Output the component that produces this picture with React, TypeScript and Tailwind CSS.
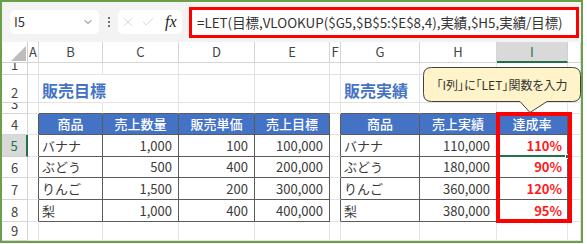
import { Check, ChevronDown, X } from "lucide-react";

const COLS = ["A", "B", "C", "D", "E", "F", "G", "H", "I", ""];

// row 1..9 content, col index A=0..J=9
const DATA: Record<number, Record<number, string>> = {
  2: { 1: "販売目標", 6: "販売実績" },
  4: { 1: "商品", 2: "売上数量", 3: "販売単価", 4: "売上目標", 6: "商品", 7: "売上実績", 8: "達成率" },
  5: { 1: "バナナ", 2: "1,000", 3: "100", 4: "100,000", 6: "バナナ", 7: "110,000", 8: "110%" },
  6: { 1: "ぶどう", 2: "500", 3: "400", 4: "200,000", 6: "ぶどう", 7: "180,000", 8: "90%" },
  7: { 1: "りんご", 2: "1,500", 3: "200", 4: "300,000", 6: "りんご", 7: "360,000", 8: "120%" },
  8: { 1: "梨", 2: "1,000", 3: "400", 4: "400,000", 6: "梨", 7: "380,000", 8: "95%" },
};

const inTable = (r: number, c: number) =>
  r >= 4 && r <= 8 && ((c >= 1 && c <= 4) || (c >= 6 && c <= 8));

function Cell({ r, c }: { r: number; c: number }) {
  const text = DATA[r]?.[c] ?? "";
  const table = inTable(r, c);
  const rightDark = table || inTable(r, c + 1);
  const bottomDark = table || inTable(r + 1, c);
  const isTitle = r === 2 && (c === 1 || c === 6);
  const isHead = table && r === 4;
  const isText = c === 1 || c === 6;

  let right = rightDark ? "border-r-[#5b5b5b]" : "border-r-[#e3e3e3]";
  if (r === 2 && c === 1) right = "border-r-transparent";
  const bottom = bottomDark ? "border-b-[#5b5b5b]" : "border-b-[#e3e3e3]";

  let inner = "";
  if (isTitle) inner = "text-[16px] font-bold text-[#4472c4] items-center pl-[3px] pt-[3px] z-10";
  else if (isHead) inner = "bg-[#4472c4] text-white font-medium justify-center items-center";
  else if (table && c === 8) inner = "text-[#ff1a1a] font-bold justify-end items-center pr-[5px]";
  else if (table && isText) inner = "text-[#3a3a3a] items-center pl-[3px]";
  else if (table) inner = "text-[#3a3a3a] justify-end items-center pr-[6px]";

  return (
    <div className={`flex border-r border-b ${right} ${bottom} whitespace-nowrap text-[13px] ${inner}`}>
      {text}
    </div>
  );
}

export default function App() {
  const rows = [1, 2, 3, 4, 5, 6, 7, 8, 9];
  return (
    <div className="relative w-[587px] h-[244px] bg-white overflow-hidden [font-family:'Noto_Sans_CJK_JP','Noto_Sans',sans-serif]">
      <div className="w-[583px] h-[243px] border-2 border-[#6b9f4a] flex flex-col">
        {/* TOOLBAR */}
        <div className="h-[40px] shrink-0 bg-[#f3f3f3] flex items-center pl-[8px] gap-[0px]">
          <div className="w-[89px] h-[24px] bg-white rounded-[5px] flex items-center justify-between pl-[4px] pr-[5px] text-[13px] text-[#333]">
            <span>I5</span>
            <ChevronDown size={12} strokeWidth={1.6} className="text-[#444]" />
          </div>
          <div className="w-[19px] flex flex-col items-center gap-[2px]">
            <div className="w-[2px] h-[2px] bg-[#444] rounded-full" />
            <div className="w-[2px] h-[2px] bg-[#444] rounded-full" />
            <div className="w-[2px] h-[2px] bg-[#444] rounded-full" />
          </div>
          <div className="w-[64px] h-[24px] bg-white rounded-[5px] flex items-center pl-[3px] gap-[6px]">
            <X size={14} strokeWidth={1} className="text-[#b5b5b5]" />
            <Check size={14} strokeWidth={1} className="text-[#b5b5b5]" />
            <span className="ml-[4px] text-[16px] italic text-[#222] [font-family:'Liberation_Serif',serif]">fx</span>
          </div>
          <div className="ml-[7px] w-[390px] h-[31px] bg-white border-[3px] border-[#ff0000] flex items-center pl-[5px] text-[13.4px] text-[#333] whitespace-nowrap overflow-hidden">
            =LET(目標,VLOOKUP($G5,$B$5:$E$8,4),実績,$H5,実績/目標)
          </div>
        </div>

        {/* SHEET */}
        <div className="grid grid-cols-[26px_11px_64px_76px_76px_75px_11px_79px_77px_71px_13px] grid-rows-[21px_12px_28px_11px_21px_22px_21px_22px_22px_19px] text-[13px] text-[#444]">
          {/* corner */}
          <div className="border-r border-b border-[#d0d0d0] flex items-end justify-end pr-[1px] pb-[1px]">
            <svg width="15" height="15" viewBox="0 0 15 15">
              <polygon points="15,0 15,15 0,15" fill="#bdbdbd" />
            </svg>
          </div>
          {COLS.map((col, i) =>
            col === "I" ? (
              <div key={i} className="bg-[#d9d9d9] border-r border-[#d0d0d0] border-b-2 border-b-[#217346] flex items-center justify-center text-[#217346]">
                {col}
              </div>
            ) : (
              <div key={i} className="border-r border-b border-[#d5d5d5] flex items-center justify-center">
                {col}
              </div>
            )
          )}
          {rows.map((r) => (
            <div key={r} className="contents">
              {r === 5 ? (
                <div className="bg-[#d9d9d9] border-b border-[#d0d0d0] border-r-2 border-r-[#217346] flex items-end justify-center pb-[1px] text-[#217346] overflow-hidden">
                  {r}
                </div>
              ) : (
                <div className="border-r border-b border-[#d5d5d5] flex items-end justify-center pb-[1px] overflow-hidden leading-[17px]">
                  {r}
                </div>
              )}
              {COLS.map((_, c) => (
                <Cell key={c} r={r} c={c} />
              ))}
            </div>
          ))}
        </div>
      </div>

      {/* selected cell I5 */}
      <div className="absolute left-[498px] top-[155px] w-[69px] h-[2px] bg-[#217346]" />
      <div className="absolute left-[565px] top-[154px] w-[5px] h-[5px] bg-[#217346] border border-white" />

      {/* red highlight on column I */}
      <div className="absolute left-[496px] top-[112px] w-[76px] h-[111px] border-4 border-[#ff0000]" />

      {/* callout */}
      <div className="absolute left-[423px] top-[67px] w-[158px] h-[47px]">
        <svg width="158" height="47" viewBox="0 0 158 47" className="absolute inset-0">
          <path
            d="M8.5,0.5 H149.5 Q157.5,0.5 157.5,8.5 V26.5 Q157.5,34.5 149.5,34.5 H124 L107,45.5 L97,34.5 H8.5 Q0.5,34.5 0.5,26.5 V8.5 Q0.5,0.5 8.5,0.5 Z"
            fill="#fff3c9"
            stroke="#404040"
            strokeWidth="1"
          />
        </svg>
        <div className="relative h-[35px] flex items-center justify-center text-[12px] text-[#333] [font-feature-settings:'palt']">
          「I列」に「LET」関数を入力
        </div>
      </div>
    </div>
  );
}
